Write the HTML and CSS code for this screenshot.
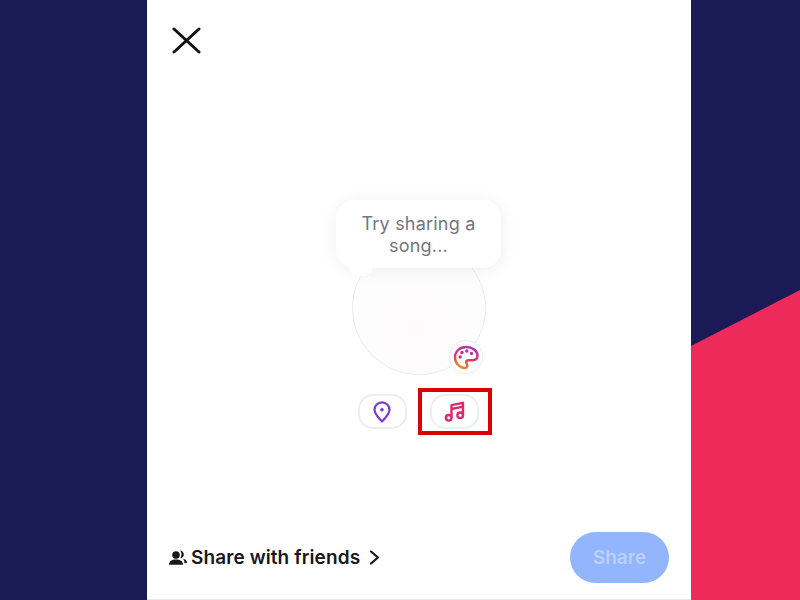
FILE: index.html
```html
<!DOCTYPE html>
<html lang="en">
<head>
    <meta charset="UTF-8">
    <meta name="viewport" content="width=device-width, initial-scale=1.0">
    <title>Share a note</title>
    <link rel="stylesheet" href="styles.css">
</head>
<body>
    <div class="side side-left"></div>
    <main class="phone">
        <div class="top-bar">
            <button class="close-btn" aria-label="Close">
                <svg width="30" height="27" viewBox="0 0 30 27"><path d="M3 2 28 25M28 2 3 25" fill="none" stroke="#111" stroke-width="3" stroke-linecap="round"/></svg>
            </button>
        </div>
        <div class="composer">
            <div class="avatar">
                <div class="bubble">
                    <p>Try sharing a song...</p>
                    <span class="bubble-tail"></span>
                </div>
                <button class="palette-btn" aria-label="Theme">
                    <svg width="26" height="25" viewBox="0 0 26 25">
                        <defs>
                            <linearGradient id="paletteGrad" x1="0.6" y1="0" x2="0.3" y2="1">
                                <stop offset="0" stop-color="#b52fb8"/>
                                <stop offset="0.5" stop-color="#e5305f"/>
                                <stop offset="1" stop-color="#f28a25"/>
                            </linearGradient>
                        </defs>
                        <path d="M13 2C6.6 2 2 6.6 2 12.2 2 18 6.5 23 11.8 23c1.8 0 2.6-1.1 2.6-2.3 0-1.700-1.200-2-1.200-3.400 0-1.300 1-2.100 2.400-2.100h3.600c2.900 0 5.300-1.500 5.300-4.500C24.500 5.700 19.500 2 13 2Z" fill="none" stroke="url(#paletteGrad)" stroke-width="2.400"/>
                        <circle cx="7.200" cy="12" r="1.700" fill="#e5305f"/>
                        <circle cx="9" cy="7.500" r="1.700" fill="#c42f9c"/>
                        <circle cx="13.800" cy="6" r="1.700" fill="#b52fb8"/>
                        <circle cx="18.500" cy="8.500" r="1.700" fill="#c42f9c"/>
                    </svg>
                </button>
            </div>
            <div class="actions">
                <button class="action-btn" aria-label="Location">
                    <svg width="18" height="22" viewBox="0 0 18 22"><path d="M9 20.500C5 16.500 1.500 13 1.500 8.800a7.500 7.500 0 0 1 15 0C16.500 13 13 16.500 9 20.500Z" fill="none" stroke="#7a3bd3" stroke-width="2.200" stroke-linejoin="round"/><circle cx="9" cy="8.800" r="1.800" fill="#7a3bd3"/></svg>
                </button>
                <div class="music-wrap">
                    <button class="action-btn" aria-label="Music">
                        <svg width="21" height="21" viewBox="0 0 21 21"><path d="M7.500 16.500V4.200L19 1.800V14M7.500 8 19 5.600" fill="none" stroke="#d92a72" stroke-width="2.400" stroke-linejoin="round"/><circle cx="4.700" cy="16.800" r="2.800" fill="none" stroke="#d92a72" stroke-width="2.400"/><circle cx="16.200" cy="14.300" r="2.800" fill="none" stroke="#d92a72" stroke-width="2.400"/></svg>
                    </button>
                    <span class="highlight"></span>
                </div>
            </div>
        </div>
        <div class="footer">
            <div class="audience">
                <svg width="18" height="15" viewBox="0 0 18 15"><circle cx="7" cy="5" r="3.800" fill="#17171c"/><path d="M0 14.800c0-3.700 3-5.300 7-5.300s7 1.600 7 5.300Z" fill="#17171c"/><path d="M11 .6a4 4 0 0 1 1.500 7.600C11.900 8.500 11.500 8 11.800 7a6 6 0 0 0-.8-6.400ZM14 8.700c2.300.5 4 1.700 4 3.800 0 .5-.4.800-1 .8h-1.500c0-1.800-.5-3.200-1.500-4.600Z" fill="#17171c"/></svg>
                <span class="audience-label">Share with friends</span>
                <svg width="11" height="15" viewBox="0 0 11 15"><path d="M2 1.500 9 7.500 2 13.500" fill="none" stroke="#17171c" stroke-width="2.200" stroke-linecap="round" stroke-linejoin="round"/></svg>
            </div>
            <button class="share-btn">Share</button>
        </div>
    </main>
    <div class="side side-right">
        <svg width="109" height="600" viewBox="0 0 109 600"><polygon points="0,346 109,290 109,600 0,600" fill="#ee2a5b"/></svg>
    </div>
</body>
</html>
```

FILE: styles.css
```css
* {
    margin: 0;
    padding: 0;
    box-sizing: border-box;
}

body {
    display: flex;
    width: 800px;
    height: 600px;
    overflow: hidden;
    background-color: #1a1a56;
    font-family: "Inter", "Liberation Sans", sans-serif;
}

button {
    display: flex;
    justify-content: center;
    align-items: center;
    border: none;
    background: none;
    font-family: inherit;
}

.side {
    background-color: #1a1a56;
}

.side-left {
    width: 147px;
}

.side-right {
    width: 109px;
}

.side-right svg {
    display: block;
}

.phone {
    display: flex;
    flex-direction: column;
    width: 544px;
    height: 600px;
    background-color: #fff;
}

.top-bar {
    padding: 27px 0 0 24px;
    height: 241px;
}

.close-btn {
    width: 30px;
    height: 27px;
}

.composer {
    display: flex;
    flex-direction: column;
    align-items: center;
    gap: 19px;
}

.avatar {
    position: relative;
    width: 134px;
    height: 134px;
    border: 1px solid #ececef;
    border-radius: 50%;
    background: radial-gradient(circle at 50% 65%, #fdfafb 0%, #fdfdfe 60%, #fff 100%);
}

.bubble {
    position: absolute;
    top: -42px;
    left: -17px;
    width: 165px;
    height: 68px;
    padding: 13px 20px;
    border-radius: 18px;
    background-color: #fff;
    box-shadow: 0 2px 16px rgba(40, 40, 60, 0.08);
    text-align: center;
    font-size: 18px;
    line-height: 22px;
    letter-spacing: 0.2px;
    color: #72767d;
}

.bubble-tail {
    position: absolute;
    left: 13px;
    bottom: -8px;
    width: 24px;
    height: 16px;
    border-radius: 50%;
    background-color: #fff;
}

.palette-btn {
    position: absolute;
    left: 96px;
    top: 98px;
    width: 34px;
    height: 34px;
    border: 1px solid #ececef;
    border-radius: 50%;
    background-color: #fff;
}

.actions {
    display: flex;
    gap: 23px;
    margin-right: 2px;
}

.music-wrap {
    position: relative;
}

.action-btn {
    width: 49px;
    height: 35px;
    border: 2px solid #eeeef0;
    border-radius: 15px;
    background-color: #fff;
}

.highlight {
    position: absolute;
    top: -6px;
    left: -12px;
    width: 74px;
    height: 47px;
    border: 4px solid #d90007;
}

.footer {
    display: flex;
    justify-content: space-between;
    align-items: center;
    margin-top: auto;
    padding: 0 22px 16px;
    border-bottom: 1px solid #ececec;
}

.audience {
    display: flex;
    align-items: center;
    gap: 4px;
    color: #17171c;
}

.audience-label {
    margin-right: 5px;
    font-size: 19px;
    font-weight: 600;
    letter-spacing: 0.1px;
}

.share-btn {
    width: 99px;
    height: 51px;
    border-radius: 26px;
    background-color: #92b5fd;
    color: #bcd0fb;
    font-size: 19px;
    font-weight: 600;
}
```
